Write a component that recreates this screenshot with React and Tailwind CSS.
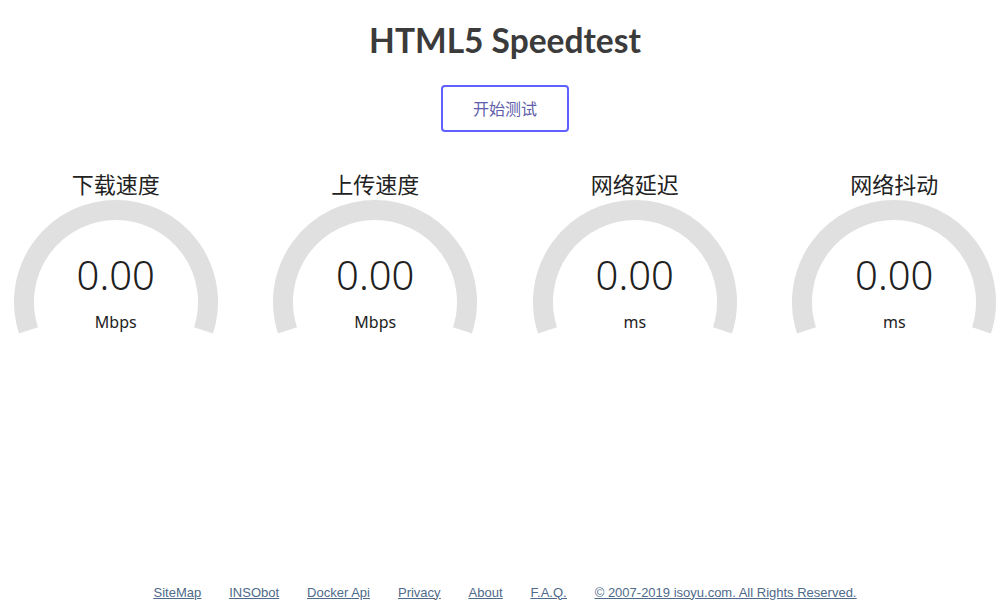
import React from "react";

const gauges = [
  { title: "下载速度", unit: "Mbps" },
  { title: "上传速度", unit: "Mbps" },
  { title: "网络延迟", unit: "ms" },
  { title: "网络抖动", unit: "ms" },
];

const links = ["SiteMap", "INSObot", "Docker Api", "Privacy", "About", "F.A.Q.", "© 2007-2019 isoyu.com. All Rights Reserved."];

const cjk = { fontFamily: '"Noto Sans", "Noto Sans CJK SC", sans-serif' };

function Meter({ title, unit }) {
  // arc from -1.1π to 0.1π, radius 92, 20px stroke
  const cx = 102, cy = 102, r = 92;
  const a0 = -1.1 * Math.PI, a1 = 0.1 * Math.PI;
  const x0 = cx + r * Math.cos(a0), y0 = cy + r * Math.sin(a0);
  const x1 = cx + r * Math.cos(a1), y1 = cy + r * Math.sin(a1);
  return (
    <div className="flex flex-col items-center w-[204px]">
      <div className="text-[22px] leading-[30px] text-[#222] mb-[1px]" style={cjk}>{title}</div>
      <div className="relative w-[204px] h-[136px]">
        <svg width="204" height="136" viewBox="0 0 204 136" className="absolute left-0 top-0">
          <path d={`M ${x0} ${y0} A ${r} ${r} 0 1 1 ${x1} ${y1}`} fill="none" stroke="#e0e0e0" strokeWidth="20" />
        </svg>
        <div className="absolute left-0 right-0 top-[50px] text-center text-[40px] leading-[50px] font-light text-[#202020]" style={cjk}>0.00</div>
        <div className="absolute left-0 right-0 top-[111px] text-center text-[16px] leading-[22px] text-[#222]" style={cjk}>{unit}</div>
      </div>
    </div>
  );
}

export default function App() {
  return (
    <div className="w-[1000px] h-[612px] bg-white pl-[10px] flex flex-col items-center overflow-hidden">
      <h1 className="mt-[18px] text-[33.5px] leading-[44px] font-bold text-[#3b3b3b]" style={{ fontFamily: 'Lato, "Noto Sans", sans-serif' }}>HTML5 Speedtest</h1>
      <button className="mt-[23px] w-[128px] h-[47px] border-2 border-[#6060ff] rounded-[4px] text-[16px] text-[#6060aa] bg-white" style={cjk}>开始测试</button>
      <div className="mt-[37px] flex gap-[55.5px]">
        {gauges.map((g) => <Meter key={g.title} {...g} />)}
      </div>
      <div className="mt-auto mb-[10px] flex gap-[28px] text-[13px] text-[#4f6a8a] underline" style={{ fontFamily: '"Liberation Sans", Arial, sans-serif' }}>
        {links.map((l) => <a key={l} href="#" className="underline">{l}</a>)}
      </div>
    </div>
  );
}
